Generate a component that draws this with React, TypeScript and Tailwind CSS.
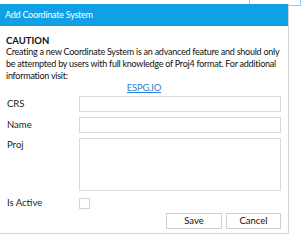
import React from "react";

const Field = ({ label, tall }: { label: string; tall?: boolean }) => (
  <div className={`flex ${tall ? "items-start" : "items-center"}`}>
    <label className={`w-[72px] text-[9.5px] leading-[12px] text-[#1a1a1a] ${tall ? "pt-[1px]" : ""}`}>
      {label}
    </label>
    {tall ? (
      <textarea className="w-[202px] h-[53px] border border-[#d9d9d9] bg-white resize-none outline-none" />
    ) : (
      <input className="w-[202px] h-[16px] border border-[#d9d9d9] bg-white outline-none" />
    )}
  </div>
);

export default function App() {
  return (
    <div className="relative w-[302px] h-[240px] bg-white overflow-hidden font-['Lato','Noto_Sans',sans-serif]">
      {/* window behind the dialog */}
      <div className="absolute left-[249px] top-0 w-[52px] h-[6px] border border-t-0 border-[#8ecbf0]" />

      <div className="relative pt-[4px]">
        <div className="w-[289px] h-[230px] bg-white border-r border-b border-[#d4d4d4] flex flex-col overflow-hidden">
          <div className="h-[22px] shrink-0 bg-[#0fa0e6] flex items-center px-[5px] text-white text-[9px] tracking-[-0.25px]">
            Add Coordinate System
          </div>

          <div className="pl-[6px] pt-[9px] flex flex-col text-[#111]">
            <div className="text-[9.5px] leading-[12px] font-bold">CAUTION</div>
            <p className="text-[9px] leading-[12px] tracking-[-0.25px] mt-[-1px]">
              Creating a new Coordinate System is an advanced feature and should only be attempted
              by users with full knowledge of Proj4 format. For additional information visit:
            </p>
            <div className="flex justify-center pr-[6px]">
              <a className="text-[9.5px] leading-[12px] text-[#2a7fd4] underline tracking-[-0.2px]">ESPG.IO</a>
            </div>

            <div className="flex flex-col gap-[5px] mt-[2px] pl-[1px]">
              <Field label="CRS" />
              <Field label="Name" />
              <Field label="Proj" tall />
              <div className="flex items-center mt-[1px]">
                <label className="w-[72px] text-[9.5px] leading-[12px] text-[#1a1a1a]">Is Active</label>
                <span className="w-[11px] h-[11px] border border-[#d4d4d4] bg-white" />
              </div>
            </div>

            <div className="flex justify-end gap-[4px] pr-[7px] mt-[4px]">
              <button className="w-[56px] h-[16px] border border-[#cfcfcf] bg-white text-[9.5px] leading-[12px] text-[#111]">
                Save
              </button>
              <button className="w-[55px] h-[16px] border border-[#cfcfcf] bg-white text-[9.5px] leading-[12px] text-[#111]">
                Cancel
              </button>
            </div>
          </div>
        </div>
      </div>
    </div>
  );
}
